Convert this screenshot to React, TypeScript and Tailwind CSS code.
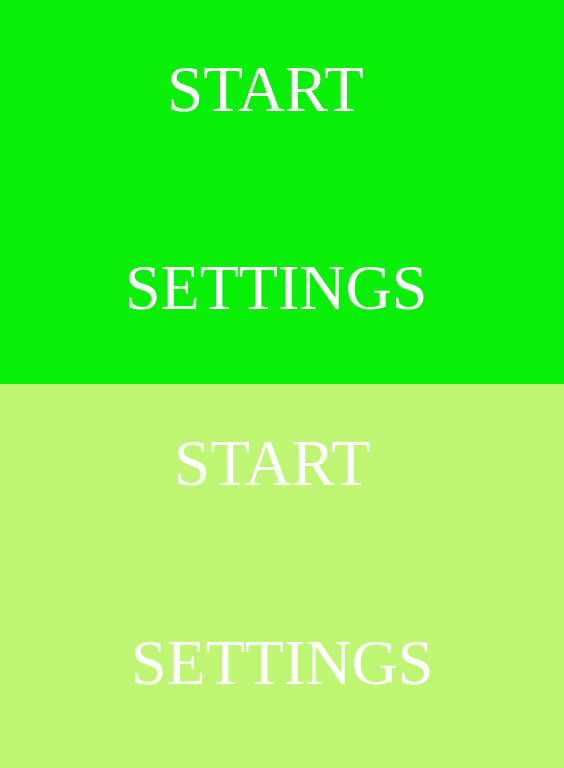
export default function App() {
  const font = { fontFamily: '"Liberation Serif", "Times New Roman", serif' };
  return (
    <div className="w-[564px] h-[768px] flex flex-col text-white" style={font}>
      <div className="h-[384px] bg-[#0aef08] flex flex-col">
        <div className="mt-[57px] ml-[167px] text-[65px] leading-none">START</div>
        <div className="mt-[134px] ml-[125px] text-[64px] leading-none">SETTINGS</div>
      </div>
      <div className="h-[384px] bg-[#bef673] flex flex-col">
        <div className="mt-[47px] ml-[174px] text-[65px] leading-none">START</div>
        <div className="mt-[135px] ml-[131px] text-[64px] leading-none">SETTINGS</div>
      </div>
    </div>
  );
}
